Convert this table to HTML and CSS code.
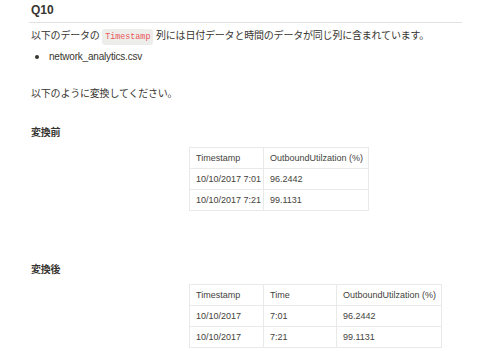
FILE: index.html
```html
<!DOCTYPE html>
<html lang="ja">

<head>
    <title>Q10</title>
    <meta charset="utf-8">
    <meta name="viewport" content="width=device-width, initial-scale=1">
    <link rel="stylesheet" href="styles.css">
</head>

<body>
    <div class="page">
        <h2>Q10</h2>
        <p class="lead">以下のデータの <code>Timestamp</code> 列には日付データと時間のデータが同じ列に含まれています。</p>
        <ul class="files">
            <li>network_analytics.csv</li>
        </ul>
        <p class="ask">以下のように変換してください。</p>

        <h4 class="before">変換前</h4>
        <table class="data two">
            <tr>
                <td class="w-date">Timestamp</td>
                <td class="w-util">OutboundUtilzation (%)</td>
            </tr>
            <tr>
                <td>10/10/2017 7:01</td>
                <td>96.2442</td>
            </tr>
            <tr>
                <td>10/10/2017 7:21</td>
                <td>99.1131</td>
            </tr>
        </table>

        <h4 class="after">変換後</h4>
        <table class="data three">
            <tr>
                <td class="w-date">Timestamp</td>
                <td class="w-time">Time</td>
                <td class="w-util">OutboundUtilzation (%)</td>
            </tr>
            <tr>
                <td>10/10/2017</td>
                <td>7:01</td>
                <td>96.2442</td>
            </tr>
            <tr>
                <td>10/10/2017</td>
                <td>7:21</td>
                <td>99.1131</td>
            </tr>
        </table>
    </div>
</body>

</html>
```

FILE: styles.css
```css
* {
    margin: 0;
    padding: 0;
    box-sizing: border-box;
}

body {
    margin: 0;
    background-color: #fff;
    color: #37352f;
    font-family: "Liberation Sans", "Noto Sans CJK JP", sans-serif;
    font-size: 10px;
    letter-spacing: -0.2px;
}

.page {
    margin-left: 29px;
    width: 433px;
}

h2 {
    font-size: 12px;
    font-weight: 600;
    line-height: 20px;
    padding: 0 2px 2px;
    border-bottom: 1px solid #e3e2e0;
    letter-spacing: 0;
}

p {
    line-height: 16px;
    padding: 0 2px;
}

.lead {
    margin-top: 5px;
}

code {
    font-family: "Liberation Mono", "DejaVu Sans Mono", monospace;
    font-size: 8.4px;
    letter-spacing: 0;
    color: #eb5757;
    background-color: rgba(135, 131, 120, 0.15);
    border-radius: 3px;
    padding: 3px 3px;
}

.files {
    margin-top: 4px;
    list-style: none;
}

.files li {
    display: flex;
    align-items: center;
    line-height: 16px;
    padding-left: 6px;
}

/* round bullet before each file name */
.files li::before {
    content: "";
    width: 4px;
    height: 4px;
    border-radius: 50%;
    background-color: #37352f;
    margin-right: 10px;
}

.ask {
    margin-top: 21px;
}

h4 {
    font-size: 10px;
    font-weight: 700;
    line-height: 16px;
    padding: 0 2px;
}

.before {
    margin-top: 23px;
}

.after {
    margin-top: 51px;
}

.data {
    border-collapse: collapse;
    margin-top: 6px;
    margin-left: 160px;
    table-layout: fixed;
    font-size: 9px;
    letter-spacing: 0;
}

.data.two {
    width: 180px;
}

.data.three {
    width: 253px;
}

.data td {
    border: 1px solid #e9e9e7;
    height: 21px;
    padding: 0 6px;
    white-space: nowrap;
    color: #44423c;
}

.w-date {
    width: 74px;
}

.w-time {
    width: 73px;
}

.w-util {
    width: 105px;
}
```
